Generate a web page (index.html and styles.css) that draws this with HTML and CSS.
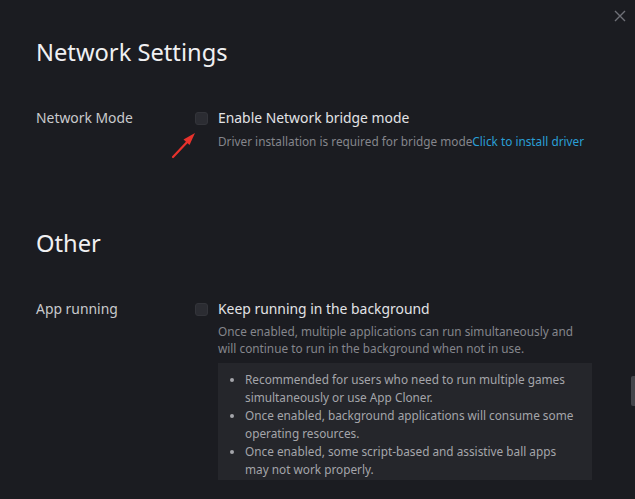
FILE: index.html
```html
<!DOCTYPE html>
<html>
  <head>
    <meta charset="UTF-8"/>
    <title>Settings</title>
    <link rel="stylesheet" href="styles.css">
  </head>
  <body>
    <div class="dialog">
      <button class="close" aria-label="Close">
        <svg width="12" height="12" viewBox="0 0 12 12"><path d="M1 1L11 11M11 1L1 11" stroke="#6f7077" stroke-width="1.4"/></svg>
      </button>

      <section class="group">
        <h2>Network Settings</h2>
        <div class="row">
          <div class="label">Network Mode</div>
          <div class="control">
            <label class="check">
              <span class="box"></span>
              <span class="title">Enable Network bridge mode</span>
            </label>
            <p class="hint nowrap">Driver installation is required for bridge mode<a href="#">Click to install driver</a></p>
            <svg class="arrow" width="28" height="28" viewBox="0 0 28 28">
              <path d="M3 26L20 8" stroke="#e8322c" stroke-width="2.2" stroke-linecap="round"/>
              <path d="M25 2L13.5 8.5L19.5 14Z" fill="#e8322c"/>
            </svg>
          </div>
        </div>
      </section>

      <section class="group other">
        <h2>Other</h2>
        <div class="row">
          <div class="label">App running</div>
          <div class="control">
            <label class="check">
              <span class="box"></span>
              <span class="title">Keep running in the background</span>
            </label>
            <p class="hint">Once enabled, multiple applications can run simultaneously and will continue to run in the background when not in use.</p>
            <ul class="notes">
              <li>Recommended for users who need to run multiple games simultaneously or use App Cloner.</li>
              <li>Once enabled, background applications will consume some operating resources.</li>
              <li>Once enabled, some script-based and assistive ball apps may not work properly.</li>
            </ul>
          </div>
        </div>
      </section>

      <div class="scrollbar"></div>
    </div>
  </body>
</html>
```

FILE: styles.css
```css
html, body { padding: 0; margin: 0; }
body {
    background: #1b1c21;
    font-family: "Noto Sans", "Open Sans", sans-serif;
    color: #d6d7da;
}
.dialog {
    position: relative;
    width: 635px;
    height: 499px;
    overflow: hidden;
    padding: 36px 0 0 36px;
    box-sizing: border-box;
}
.close {
    position: absolute;
    top: 10px;
    right: 9px;
    border: 0;
    padding: 0;
    background: none;
    line-height: 0;
}
.group h2 {
    margin: 0;
    font-size: 23.7px;
    font-weight: normal;
    color: #f0f0f2;
    line-height: 32px;
}
.group.other { margin-top: 77px; }
.row {
    display: flex;
    margin-top: 40px;
}
.label {
    width: 159px;
    flex: none;
    font-size: 13.9px;
    line-height: 20px;
    color: #c9cacd;
}
.control {
    position: relative;
    width: 397px;
}
.check {
    display: flex;
    align-items: center;
    gap: 10px;
}
.box {
    width: 13px;
    height: 13px;
    border-radius: 3px;
    background: #2b2c32;
    border: 1px solid #33343a;
    box-sizing: border-box;
}
.title {
    font-size: 13.9px;
    line-height: 20px;
    color: #e2e3e6;
}
.hint {
    margin: 4px 0 0 23px;
    font-size: 11.8px;
    line-height: 17px;
    color: #85868c;
}
.hint.nowrap { margin-top: 5px; white-space: nowrap; }
.hint a {
    color: #2a9fd6;
    text-decoration: none;
}
.arrow {
    position: absolute;
    left: -25px;
    top: 23px;
}
.notes {
    margin: 6px 0 0 23px;
    padding: 8px 14px 1px 27px;
    background: #25262b;
    font-size: 11.8px;
    line-height: 17.5px;
    color: #a4a5aa;
}
.notes li { margin-bottom: 1px; }
.scrollbar {
    position: absolute;
    right: 0;
    top: 376px;
    width: 4px;
    height: 30px;
    border-radius: 2px 0 0 2px;
    background: #44454b;
}
```
